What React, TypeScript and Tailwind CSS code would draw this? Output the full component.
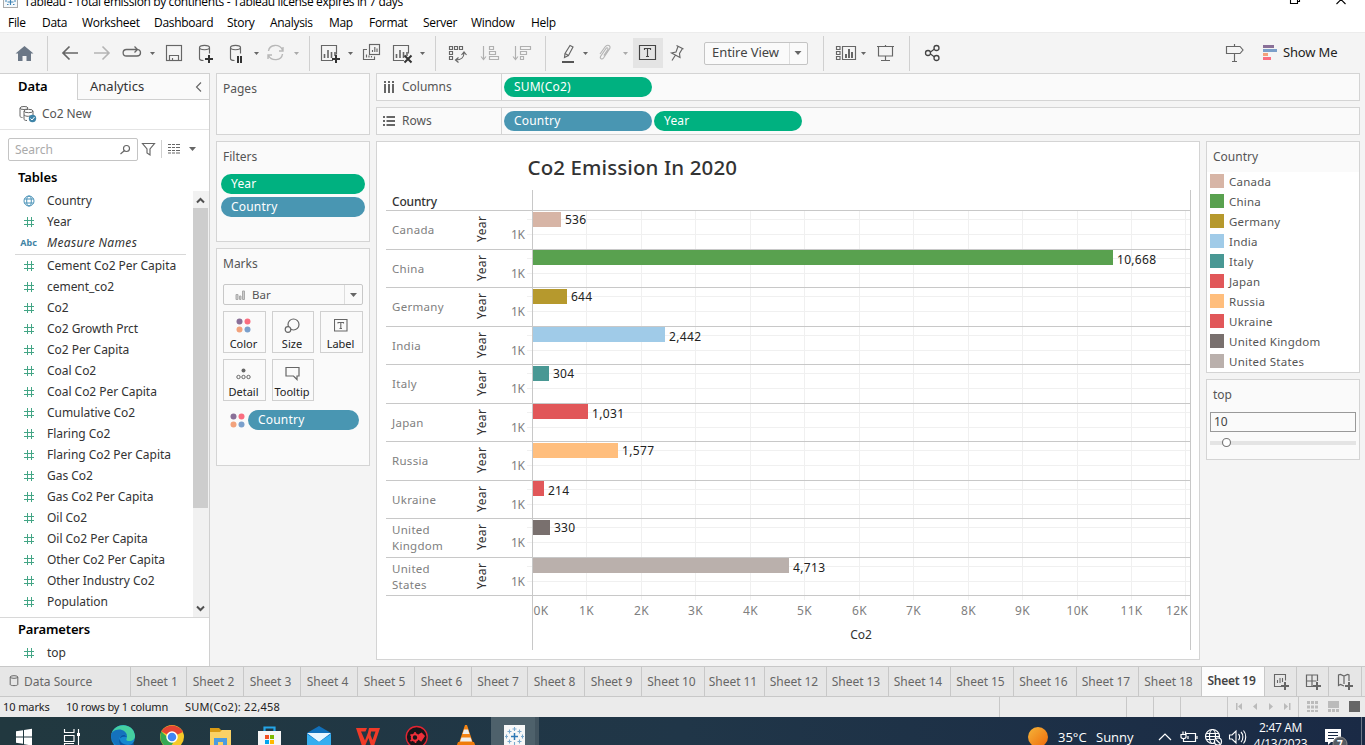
import React from "react";

const ui = "font-['Noto_Sans','Open_Sans',sans-serif]";

/* Icon canvas: coordinates inside are window coordinates, so neighbouring icons share one pixel grid. */
function Ico({ x, y, w, h, children }: { x: number; y: number; w: number; h: number; children?: React.ReactNode }) {
  return (
    <svg className="block shrink-0" width={w} height={h} viewBox={`${x} ${y} ${w} ${h}`} fill="none" stroke="#666" strokeWidth="1.150">
      {children}
    </svg>
  );
}

function Caret({ x, y = 52, s = 3, c = "#666" }: { x: number; y?: number; s?: number; c?: string }) {
  return <path d={`M${x - s} ${y}h${s * 2}l${-s} ${s + 0.5}z`} fill={c} stroke="none" />;
}

const Sep = () => <div className="h-[35px] w-px shrink-0 bg-[#d0d0d0]" />;

const menus: [string, string][] = [
  ["File", "w-[34px]"], ["Data", "w-[40px]"], ["Worksheet", "w-[72px]"], ["Dashboard", "w-[73px]"], ["Story", "w-[43px]"],
  ["Analysis", "w-[59px]"], ["Map", "w-[40px]"], ["Format", "w-[54px]"], ["Server", "w-[48px]"], ["Window", "w-[60px]"], ["Help", "w-[40px]"],
];

function TopBar() {
  return (
    <header className="h-8 shrink-0 overflow-hidden bg-white font-['Open_Sans','Noto_Sans',sans-serif] text-[12px] text-black">
      <div className="flex h-[13px] items-end overflow-hidden">
        <Ico x={0} y={0} w={23} h={13}>
          <rect x="3.500" y="-8.500" width="14" height="16" fill="#f4f8fb" stroke="#aaa" strokeWidth="1" />
          <path d="M10.500-3v8M7.500 2h6M5 1h2M14 1h2M7 4.500h1.500M13 4.500h1.500" stroke="#3f83b5" />
        </Ico>
        <span className="h-[16px] shrink-0 whitespace-nowrap pl-px leading-[9px] tracking-[-0.37px]">Tableau - Total emission by continents - Tableau license expires in 7 days</span>
        <div className="grow" />
        <Ico x={1285} y={0} w={80} h={13}>
          <path d="M1290.500-3v6.500h7v-6.500M1297 1.500h2.500v-4M1336.500 4l9-9M1345.500 4l-9-9" stroke="#000" strokeWidth="1.100" />
        </Ico>
      </div>
      <nav className="flex h-[19px] items-center pl-2 leading-[18px] tracking-[-0.3px]">
        {menus.map(([m, w]) => <span key={m} className={`${w} shrink-0 whitespace-nowrap`}>{m}</span>)}
      </nav>
    </header>
  );
}

function SheetBars({ x, y }: { x: number; y: number }) {
  return <path d={`M${x + 3.500} ${y + 13}v-4M${x + 7} ${y + 13}v-8M${x + 10.500} ${y + 13}v-6M${x + 14} ${y + 11}v-4`} strokeWidth="1.600" />;
}

function Cylinder({ x }: { x: number }) {
  return (
    <>
      <ellipse cx={x + 5} cy="47.500" rx="5" ry="2.200" />
      <path d={`M${x} 47.500v11c0 1.200 2 2 4 2M${x + 10} 47.500v6`} />
    </>
  );
}

function Toolbar() {
  return (
    <div className={`flex h-[41px] shrink-0 items-center border-t border-[#ececec] bg-[#f4f4f4] ${ui}`}>
      <Ico x={0} y={33} w={47} h={40}>
        <path d="M24.500 46l9 7.500h-2.500v7.500h-4.500v-5h-4v5h-4.500v-7.500h-2.500z" fill="#6b7786" stroke="none" />
      </Ico>
      <Sep />
      <Ico x={48} y={33} w={110} h={40}>
        <path d="M78 53h-15M69.500 46.500l-6.500 6.500l6.500 6.500" strokeWidth="1.700" />
        <path d="M94 53h15M102.500 46.500l6.500 6.500l-6.500 6.500" stroke="#b4b4b4" strokeWidth="1.600" />
        <path d="M138 49.500c3.500 1 3.500 6.500-1 6.500h-10.500c-4.500 0-4.500-6.500 0-6.500h11M134.500 46.500l3 3l-3 3" strokeWidth="1.300" />
        <Caret x={152.500} s={2.500} />
      </Ico>
      <Ico x={158} y={33} w={68} h={40}>
        <rect x="166.500" y="45.500" width="15" height="15" />
        <path d="M169.500 60.500v-5h9v5M172.500 58v2.500" />
        <Cylinder x={199.500} />
        <path d="M209 55v8M205 59h8" stroke="#333" strokeWidth="2" />
      </Ico>
      <Ico x={226} y={33} w={83} h={40}>
        <Cylinder x={230.500} />
        <path d="M238 56v7M241 56v7" stroke="#333" strokeWidth="2" />
        <Caret x={256.500} s={2.500} />
        <path d="M268.500 51c1-7 11-7.500 14-1M283 47v4h-4M282.500 54c-1 7-11 7.500-14 1.500M268 59v-4h4" stroke="#b8b8b8" strokeWidth="1.400" />
        <Caret x={296.500} s={2.500} c="#aaa" />
      </Ico>
      <Sep />
      <Ico x={310} y={33} w={125} h={40}>
        <path d="M333 60.500h-11.500v-15h15v9" />
        <SheetBars x={321} y={45} />
        <path d="M336 55v8M332 59h8" stroke="#333" strokeWidth="2" />
        <Caret x={350.500} s={2.500} />
        <rect x="369.500" y="44.500" width="10" height="10" />
        <path d="M367 49.500h-3.500v10h11v-3M372.500 52v-2M374.800 52v-5M377 52v-3.500M366.500 57.500v-3M369 57.500v-2M371.500 57.500v-1.500" />
        <path d="M404 60.500h-10.500v-15h15v8" />
        <SheetBars x={393} y={45} />
        <path d="M404.500 55.500l7 7M411.500 55.500l-7 7" stroke="#333" strokeWidth="2" />
        <Caret x={422.500} s={2.500} />
      </Ico>
      <Sep />
      <Ico x={436} y={33} w={109} h={40}>
        <path d="M449.500 46.500h3v3h-3zM454.500 46.500h3v3h-3zM459.500 46.500h3v3h-3zM449.500 51.500h3v3h-3zM449.500 56.500h3v3h-3z" />
        <path d="M456 60c5 0 8-3 8-7M458.500 57.500l-3 2.500l3 2.500M461.500 55l2.500-3l2.500 3" />
        <g stroke="#b0b0b0">
          <path d="M483.500 46v13M481 56.500l2.500 3l2.500-3M515.500 46v13M513 56.500l2.500 3l2.500-3" />
          <path d="M489.500 46.500h4v3h-4zM489.500 51.500h6v3h-6zM489.500 56.500h9v3h-9zM520.500 46.500h10v3h-10zM520.500 51.500h6v3h-6zM520.500 56.500h3v3h-3z" />
        </g>
      </Ico>
      <Sep />
      <Ico x={546} y={33} w={87} h={40}>
        <path d="M565 53.500l5-8l3 1.500l-4.500 8.500zM565 53.500l-.5 4l4-2" />
        <path d="M562 62h12" stroke="#555" strokeWidth="2" />
        <Caret x={585.500} s={2.500} />
        <path d="M600 54l5-7c2.500-3.500 6.500-1 4.500 2l-6 9c-1.500 2-4 .5-3-1.500l5.500-8c1-1.500 2.500-.5 1.800 1l-4 6" stroke="#b4b4b4" />
        <Caret x={625.500} s={2.500} c="#aaa" />
      </Ico>
      <div className="flex h-[30px] w-[30px] shrink-0 bg-[#e4e4e4]">
        <Ico x={633} y={38} w={30} h={30}>
          <path d="M639.500 45.500h16v14h-16zM644.500 50v-1.500h6v1.500M647.500 48.500v8M646 56.500h3" stroke="#444" />
        </Ico>
      </div>
      <Ico x={663} y={33} w={41} h={40}>
        <path d="M676.500 45.500l7 3.500M678 46.500l-2 5.500l-4.500 1l8.500 4.500l-.5-4l3-5M675.500 55l-3.500 5.500" />
      </Ico>
      <div className="flex h-[23px] w-[104px] shrink-0 items-center rounded-[2px] border border-[#c4c4c4] bg-[#fafafa] text-[13px] text-[#444]">
        <span className="w-[84px] pl-[7px] tracking-[-0.05px]">Entire View</span>
        <div className="h-full w-px bg-[#ddd]" />
        <Ico x={790} y={44} w={17} h={18}><Caret x={798} y={51} s={3.500} /></Ico>
      </div>
      <div className="w-[15px] shrink-0" />
      <Sep />
      <Ico x={824} y={33} w={85} h={40}>
        <path d="M836.500 46.500h3.500v3h-3.500zM836.500 51.500h3.500v3h-3.500zM836.500 56.500h3.500v3h-3.500zM842.500 46.500h13v13h-13z" />
        <path d="M846 58v-4M849 58v-9M852 58v-6" strokeWidth="2" />
        <Caret x={863.500} s={2.500} />
        <path d="M877 46.500h17M878.500 47v9h14v-9M885.500 45v1M885.500 56v4.500M881 60.500h9" />
      </Ico>
      <Sep />
      <Ico x={910} y={33} w={60} h={40}>
        <path d="M930.500 52l4-3M930.500 54l4 3" stroke="#444" />
        <g stroke="#444" strokeWidth="1.300">
          <circle cx="928" cy="53" r="2.500" /><circle cx="936.500" cy="48" r="2.500" /><circle cx="936.500" cy="58" r="2.500" />
        </g>
      </Ico>
      <div className="grow" />
      <Ico x={1220} y={33} w={63} h={40}>
        <path d="M1226.500 46.500h13.500l3 3.500l-3 3.500h-13.500zM1234.500 44v2M1234.500 54v7M1232 61.500h5" />
        <g stroke="none">
          <path d="M1263 45h11v3h-11z" fill="#8a7098" /><path d="M1263 49h14v3h-14z" fill="#7b9fc9" />
          <path d="M1263 53h5v3h-5z" fill="#f2a07a" /><path d="M1263 57h8v3h-8z" fill="#fa6e80" />
        </g>
      </Ico>
      <span className="w-[82px] shrink-0 text-[13px] tracking-[-0.15px] text-[#222]">Show Me</span>
    </div>
  );
}

const Hash = () => (
  <svg className="block shrink-0" width="12" height="12" viewBox="0 0 12 12" stroke="#43a585" strokeWidth="1" fill="none">
    <path d="M4.500 1v10M8.500 1v10M1 4.500h10M1 8.500h10" />
  </svg>
);

const fields = ["Cement Co2 Per Capita", "cement_co2", "Co2", "Co2 Growth Prct", "Co2 Per Capita", "Coal Co2", "Coal Co2 Per Capita", "Cumulative Co2", "Flaring Co2", "Flaring Co2 Per Capita", "Gas Co2", "Gas Co2 Per Capita", "Oil Co2", "Oil Co2 Per Capita", "Other Co2 Per Capita", "Other Industry Co2", "Population"];

function Field({ name, icon }: { name: React.ReactNode; icon?: React.ReactNode }) {
  return (
    <div className="flex h-[21px] shrink-0 items-center">
      <div className="flex w-[47px] shrink-0 justify-center pl-[10px]">{icon ?? <Hash />}</div>
      <span className="whitespace-nowrap tracking-[-0.04px]">{name}</span>
    </div>
  );
}

function DataPane() {
  return (
    <aside className={`flex h-full w-[210px] shrink-0 flex-col border-r border-t border-[#d0d0d0] bg-white text-[12px] text-[#333] ${ui}`}>
      <div className="flex h-[26px] shrink-0 text-[13px]">
        <div className="w-[77px] pl-[18px] font-semibold leading-[25px] tracking-[-0.1px] text-black">Data</div>
        <div className="flex grow justify-between border-b border-l border-[#d0d0d0] bg-[#fafafa] pl-3 leading-[25px]">
          <span>Analytics</span>
          <Ico x={190} y={73} w={19} h={25}><path d="M201 81.500l-4.500 4.500l4.500 4.500" /></Ico>
        </div>
      </div>
      <div className="flex h-[30px] shrink-0 items-center border-b border-[#e4e4e4] pb-px text-[#555]">
        <Ico x={0} y={100} w={42} h={28}>
          <ellipse cx="24" cy="108" rx="4" ry="1.500" strokeWidth="1" />
          <path d="M20 108v8c0 1 1 1.500 2.500 1.500" strokeWidth="1" />
          <ellipse cx="28.500" cy="111" rx="4.500" ry="1.700" fill="#fff" strokeWidth="1" />
          <path d="M24 111v8c0 1 1 1.500 3 1.500M33 111v4M24 115c2 1.500 4 1.500 6 1" strokeWidth="1" />
          <circle cx="32.500" cy="118.500" r="3.700" fill="#3e84a8" stroke="none" />
          <path d="M30.500 118.500l1.500 1.500l2.500-3" stroke="#fff" strokeWidth="1" />
        </Ico>
        <span className="tracking-[-0.1px]">Co2 New</span>
      </div>
      <div className="flex h-[39px] shrink-0 items-center pl-2">
        <div className="flex h-[23px] w-[130px] items-center rounded-[2px] border border-[#c4c4c4] text-[#aaa]">
          <span className="grow pl-[6px]">Search</span>
          <Ico x={118} y={139} w={19} h={21}><circle cx="126.500" cy="148.500" r="3" /><path d="M124.500 150.500l-4 3.500" /></Ico>
        </div>
        <Ico x={138} y={130} w={71} h={39}>
          <path d="M142.500 143.500h12l-4.500 5.500v6l-3-2v-4z" />
          <path d="M161.500 140v18" stroke="#d0d0d0" strokeWidth="1" />
          <path d="M168 144.500h3M172 144.500h3M176 144.500h4M168 147.500h3M172 147.500h3M176 147.500h4M168 150.500h3M172 150.500h3M176 150.500h4M168 153h3M172 153h3M176 153h4" />
          <Caret x={192.500} y={147} s={3.500} />
        </Ico>
      </div>
      <div className="h-[22px] shrink-0 pl-[18px] text-[13px] font-semibold leading-[17px] tracking-[-0.1px] text-black">Tables</div>
      <div className="flex h-[426px] shrink-0">
        <div className="flex w-[193px] flex-col overflow-hidden">
          <div className="-mt-px flex flex-col">
            <Field name="Country" icon={
              <svg width="12" height="12" viewBox="0 0 12 12" stroke="#4b93b8" fill="none"><circle cx="6" cy="6" r="5" /><ellipse cx="6" cy="6" rx="2.300" ry="5" /><path d="M1.500 4h9M1.500 8h9" /></svg>
            } />
            <Field name="Year" />
            <Field name={<i className="tracking-[0.35px]">Measure Names</i>} icon={<span className="text-[9px] font-bold text-[#3f83a5]">Abc</span>} />
          </div>
          <div className="ml-[15px] mr-[7px] mt-px h-px shrink-0 bg-[#d8d8d8]" />
          <div className="flex shrink-0 flex-col">
            {fields.map((f) => <Field key={f} name={f} />)}
          </div>
        </div>
        <div className="flex w-4 flex-col bg-[#f1f1f1]">
          <Ico x={193} y={191} w={16} h={17}><path d="M197 202.500l3.500-3.500l3.500 3.500" stroke="#505050" strokeWidth="2" /></Ico>
          <div className="h-[300px] w-[15px] bg-[#cdcdcd]" />
          <div className="grow" />
          <Ico x={193} y={599} w={16} h={17}><path d="M197 605.500l3.500 3.500l3.500-3.500" stroke="#505050" strokeWidth="2" /></Ico>
        </div>
      </div>
      <div className="h-[25px] shrink-0 border-t border-[#d8d8d8] pl-[18px] text-[13px] font-semibold leading-[23px] tracking-[-0.15px] text-black">Parameters</div>
      <Field name="top" />
    </aside>
  );
}

function Pill({ children, blue, w = "w-full" }: { children: React.ReactNode; blue?: boolean; w?: string }) {
  return <div className={`${w} ${blue ? "bg-[#4996b2]" : "bg-[#00b180]"} flex h-5 shrink-0 items-center rounded-full pl-[10px] text-[12px] tracking-[0.2px] text-white`}>{children}</div>;
}

function ColorDots() {
  return (
    <svg width="15" height="15" viewBox="0 0 15 15" className="shrink-0">
      <circle cx="3.500" cy="3.500" r="3" fill="#8a7098" /><circle cx="11.500" cy="3.500" r="3" fill="#fa6e80" />
      <circle cx="3.500" cy="11.500" r="3" fill="#f2a27c" /><circle cx="11.500" cy="11.500" r="3" fill="#7ba0cc" />
    </svg>
  );
}

function MarkButton({ label, children }: { label: string; children: React.ReactNode }) {
  return (
    <button className="flex h-[42px] flex-col items-center border border-[#d0d0d0] bg-[#fafafa] pr-[2px] text-[11px] text-[#222]">
      <div className="flex h-[26px] items-center justify-center pt-[1px]">{children}</div>
      <span className="whitespace-nowrap leading-[12px]">{label}</span>
    </button>
  );
}

const card = "border border-[#d4d4d4] bg-[#fafafa]";

function Cards() {
  return (
    <section className={`flex w-[154px] shrink-0 flex-col gap-[6px] text-[12px] text-[#555] ${ui}`}>
      <div className={`${card} h-[62px] pl-[6px] pt-[6px] leading-[18px]`}>Pages</div>
      <div className={`${card} h-[101px] px-1 pt-[6px]`}>
        <div className="mb-[8px] pl-[2px] leading-[18px]">Filters</div>
        <div className="flex flex-col gap-[3px]"><Pill>Year</Pill><Pill blue>Country</Pill></div>
      </div>
      <div className={`${card} h-[218px] pl-[6px] pr-[6px] pt-[6px]`}>
        <div className="mb-[11px] leading-[18px]">Marks</div>
        <div className="flex h-[21px] w-[140px] items-center rounded-[2px] border border-[#c8c8c8]">
          <Ico x={224} y={284} w={28} h={19}>
            <path d="M236 293.500h2v5h-2zM239.500 295h1.500v3.500h-1.500zM242.500 290h2v8.500h-2z" stroke="#aaa" fill="#ccc" strokeWidth="1" />
          </Ico>
          <span className="w-[92px] text-[11.500px]">Bar</span>
          <div className="h-full w-px bg-[#ddd]" />
          <Ico x={345} y={285} w={17} h={19}><Caret x={353.500} y={293} s={3.500} /></Ico>
        </div>
        <div className="mt-[6px] grid grid-cols-[43px_42px_43px] gap-[6px]">
          <MarkButton label="Color"><ColorDots /></MarkButton>
          <MarkButton label="Size"><svg width="16" height="16" viewBox="0 0 16 16" fill="none" stroke="#666" strokeWidth="1.200"><circle cx="9.500" cy="6.500" r="5.500" /><circle cx="4" cy="11.500" r="2.800" fill="#fafafa" /></svg></MarkButton>
          <MarkButton label="Label"><svg width="14" height="13" viewBox="0 0 14 13" fill="none" stroke="#666" strokeWidth="1.100"><path d="M.5 .5h12.500v11.500h-12.500zM4 4.500v-1h5.500v1M6.800 3.500v6M5.500 9.500h2.500" /></svg></MarkButton>
          <MarkButton label="Detail"><svg width="15" height="12" viewBox="0 0 15 12" fill="none" stroke="#666"><circle cx="7.500" cy="2.500" r="2" fill="#666" stroke="none" /><circle cx="2.500" cy="9" r="1.700" /><circle cx="7.500" cy="9" r="1.700" /><circle cx="12.500" cy="9" r="1.700" /></svg></MarkButton>
          <MarkButton label="Tooltip"><svg width="15" height="15" viewBox="0 0 15 15" fill="none" stroke="#666" strokeWidth="1.200"><path d="M1 1.500h13v8.500h-2v3.500l-3.500-3.500h-7.500z" /></svg></MarkButton>
        </div>
        <div className="mt-[9px] flex items-center gap-[3px] pl-[7px]"><ColorDots /><Pill blue w="w-[111px]">Country</Pill></div>
      </div>
    </section>
  );
}

function Shelf({ label, icon, children }: { label: string; icon: React.ReactNode; children: React.ReactNode }) {
  return (
    <div className={`${card} flex h-7 shrink-0 items-center text-[12px] text-[#555] ${ui}`}>
      <div className="flex h-full w-[125px] shrink-0 items-center border-r border-[#d4d4d4] pl-[6px]">
        {icon}<span className="pl-[7px] tracking-[0px]">{label}</span>
      </div>
      <div className="flex gap-[2px] pl-[2px]">{children}</div>
    </div>
  );
}

interface Row { name: string; color: string; end: number; value: string; vy: number; label?: string[] }
const rows: Row[] = [
  { name: "Canada", color: "#d7b5a6", end: 561, value: "536", vy: 219 },
  { name: "China", color: "#59a14f", end: 1113, value: "10,668", vy: 259 },
  { name: "Germany", color: "#b6992d", end: 567, value: "644", vy: 296 },
  { name: "India", color: "#a0cbe8", end: 665, value: "2,442", vy: 336 },
  { name: "Italy", color: "#499894", end: 549, value: "304", vy: 373 },
  { name: "Japan", color: "#e15759", end: 588, value: "1,031", vy: 413 },
  { name: "Russia", color: "#ffbe7d", end: 618, value: "1,577", vy: 450 },
  { name: "Ukraine", color: "#e15759", end: 544, value: "214", vy: 490 },
  { name: "United Kingdom", color: "#79706e", end: 550, value: "330", vy: 527, label: ["United", "Kingdom"] },
  { name: "United States", color: "#bab0ac", end: 789, value: "4,713", vy: 567, label: ["United", "States"] },
];
const lines = [210, 249, 287, 326, 364, 403, 441, 480, 518, 557, 595];
const ticks = [586, 641, 695, 750, 804, 859, 913, 968, 1022, 1077, 1131, 1185];

function Chart() {
  return (
    <svg className="block" width="822" height="517" viewBox="377 142 822 517" fontFamily="'Noto Sans', sans-serif" fontSize="12">
      <text x="527.500" y="175" fontSize="20.500" fontWeight="500" fill="#333" textLength="209.500">Co2 Emission In 2020</text>
      <text x="392" y="206" fontWeight="500" fill="#333" textLength="45">Country</text>
      <g shapeRendering="crispEdges">
        {ticks.map((t) => <rect key={t} x={t} y="211" width="1" height="389" fill="#f0f0f0" />)}
        {rows.map((r, i) => (
          <g key={r.name}>
            <rect x="527" y={lines[i] + 9} width="663" height="1" fill="#f0f0f0" />
            <rect x="527" y={lines[i] + 24} width="663" height="1" fill="#f0f0f0" />
          </g>
        ))}
        {lines.map((l) => <rect key={l} x="386" y={l} width="805" height="1" fill="#c8c8c8" />)}
        <rect x="532" y="190" width="1" height="460" fill="#c8c8c8" />
        <rect x="1190" y="190" width="1" height="460" fill="#c8c8c8" />
        {rows.map((r, i) => <rect key={r.name} x="533" y={lines[i] + (i % 2 === 0 ? 2 : 1)} width={r.end - 533} height="15" fill={r.color} />)}
      </g>
      {rows.map((r, i) => (
        <g key={r.name}>
          {r.label
            ? r.label.map((s, k) => <text key={s} x="392" y={lines[i] + 16 + k * 16} fill="#808080" fontSize="11.500" letterSpacing="0.3">{s}</text>)
            : <text x="392" y={lines[i] + 24} fill="#808080" fontSize="11.500" letterSpacing="0.3">{r.name}</text>}
          <text transform={`translate(486 ${lines[i] + 32}) rotate(-90)`} fill="#333" textLength="26">Year</text>
          <text x="511" y={lines[i] + 29} fill="#808080" textLength="14">1K</text>
          <text x={r.end + 4} y={r.vy + 5} fill="#222" textLength={r.value.length === 3 ? 21 : r.value.length === 5 ? 32 : 39}>{r.value}</text>
        </g>
      ))}
      <g fill="#808080" textAnchor="middle" letterSpacing="0.3">
        <text x="541" y="615">0K</text>
        {ticks.map((t, i) => <text key={t} x={i === 11 ? 1177 : t + 0.500} y="615">{`${i + 1}K`}</text>)}
      </g>
      <text x="861" y="639" textAnchor="middle" fill="#333">Co2</text>
    </svg>
  );
}

function Legend() {
  return (
    <aside className="flex w-[154px] shrink-0 flex-col gap-[6px] font-['Noto_Sans',sans-serif] text-[12px] text-[#555]">
      <div className="h-[232px] border border-[#d4d4d4] bg-white">
        <div className="h-[30px] bg-[#fafafa] pl-[6px] leading-[30px]">Country</div>
        {rows.map((r) => (
          <div key={r.name} className="flex h-5 items-center gap-[5px] pl-[3px]">
            <svg width="14" height="14" className="mb-[2px]"><rect width="14" height="14" fill={r.color} /></svg>
            <span className="text-[11.500px] tracking-[0.23px]">{r.name}</span>
          </div>
        ))}
      </div>
      <div className={`${card} h-[81px] px-[3px]`}>
        <div className="h-8 pl-[3px] leading-[30px]">top</div>
        <div className="h-5 border border-[#999] pl-[3px] leading-[18px] text-[#444]">10</div>
        <Ico x={1210} y={432} w={146} h={20}>
          <path d="M1210 443h146" stroke="#e4e4e4" strokeWidth="4" />
          <circle cx="1226.500" cy="442.500" r="4" fill="#fff" stroke="#777" />
        </Ico>
      </div>
    </aside>
  );
}

const tabs: [string, string][] = [
  ["Sheet 1", "w-[56px]"], ["Sheet 2", "w-[57px]"], ["Sheet 3", "w-[57px]"], ["Sheet 4", "w-[57px]"], ["Sheet 5", "w-[57px]"], ["Sheet 6", "w-[57px]"],
  ["Sheet 7", "w-[56px]"], ["Sheet 8", "w-[57px]"], ["Sheet 9", "w-[57px]"], ["Sheet 10", "w-[63px]"], ["Sheet 11", "w-[60px]"], ["Sheet 12", "w-[62px]"],
  ["Sheet 13", "w-[62px]"], ["Sheet 14", "w-[62px]"], ["Sheet 15", "w-[63px]"], ["Sheet 16", "w-[63px]"], ["Sheet 17", "w-[62px]"], ["Sheet 18", "w-[63px]"], ["Sheet 19", "w-[63px]"],
];

function Tabs() {
  return (
    <div className={`flex h-[31px] shrink-0 border-b border-t border-[#c8c8c8] bg-[#e6e6e6] text-[12px] leading-[29px] text-[#666] ${ui}`}>
      <div className="flex w-[131px] shrink-0 border-r border-[#c8c8c8]">
        <Ico x={0} y={667} w={24} h={29}><ellipse cx="14" cy="677" rx="3.800" ry="1.300" strokeWidth="1" /><path d="M10.200 677v7.500c0 1.500 7.600 1.500 7.600 0v-7.500" strokeWidth="1" /></Ico>
        <span>Data Source</span>
      </div>
      {tabs.map(([t, w], i) => (
        <div key={t} className={`${w} shrink-0 whitespace-nowrap border-r border-[#c8c8c8] pr-[3px] text-center ${i === 18 ? "bg-[#fcfcfc] font-semibold leading-[28px] tracking-[-0.25px] text-[#444]" : "tracking-[-0.05px]"}`}>{t}</div>
      ))}
      <div className="w-8 shrink-0 border-r border-[#c8c8c8]">
        <Ico x={1265} y={667} w={31} h={29}><path d="M1281 686.500h-6.500v-12h11v6M1277.500 683v-3M1280 683v-5M1282.500 682v-4" strokeWidth="1.100" /><path d="M1285 682v8M1281 686h8" strokeWidth="2" /></Ico>
      </div>
      <div className="w-8 shrink-0 border-r border-[#c8c8c8]">
        <Ico x={1297} y={667} w={31} h={29}><path d="M1313 686.500h-6.500v-11.500h11v6M1312 675v11M1306.500 681h10" strokeWidth="1.200" /><path d="M1317 682v8M1313 686h8" strokeWidth="2" /></Ico>
      </div>
      <div className="w-[33px] shrink-0 border-r border-[#c8c8c8]">
        <Ico x={1329} y={667} w={31} h={29}><path d="M1344 686l-3.500-1.500l-2 1v-10.500l2-.5l3.500 1.500l3.500-1.500l1.500.5v6M1344 676v8" strokeWidth="1.200" /><path d="M1349 682v8M1345 686h8" strokeWidth="2" /></Ico>
      </div>
    </div>
  );
}

function Status() {
  return (
    <div className={`flex h-5 shrink-0 items-center bg-[#ebebeb] pl-[3px] text-[11px] text-[#222] ${ui}`}>
      <span className="w-[63px] tracking-[-0.1px]">10 marks</span>
      <span className="w-[119px] tracking-[-0.2px]">10 rows by 1 column</span>
      <span className="tracking-[0.27px]">SUM(Co2): 22,458</span>
      <div className="grow" />
      <Ico x={999} y={697} w={366} h={20}>
        <path d="M1126.500 697v20M1153.500 697v20M1180.500 697v20M1227.500 697v20M1298.500 697v20M999.500 697v20" stroke="#c8c8c8" strokeWidth="1" />
        <g fill="#bbb" stroke="none">
          <path d="M1236 703h1.500v7h-1.500zM1242 703v7l-4-3.500zM1257 703v7l-4-3.500zM1269 703v7l4-3.500zM1284 703v7l4-3.500zM1289 703h1.500v7h-1.500z" />
          <path d="M1307 701h3v3h-3zM1311 701h3v3h-3zM1315 701h3v3h-3zM1307 705.500h3v3h-3zM1311 705.500h3v3h-3zM1315 705.500h3v3h-3zM1307 710h3v2h-3zM1311 710h3v2h-3zM1315 710h3v2h-3zM1328 701h11v7h-11zM1328 709h3v3h-3zM1332 709h3v3h-3zM1336 709h3v3h-3z" />
          <path d="M1349 701h11v11h-11z" fill="#666" />
        </g>
      </Ico>
    </div>
  );
}

function Taskbar() {
  return (
    <footer className="flex h-7 shrink-0 overflow-hidden bg-linear-to-r from-[#21383f] via-[#203648] to-[#1a2a45] font-['Open_Sans','Noto_Sans',sans-serif] text-white">
      <Ico x={0} y={717} w={100} h={28}>
        <path d="M16 731.200l7-1v6.300h-7zM24 730l8-1.200v7.700h-8zM16 737.500h7v6.300l-7-1zM24 737.500h8v8l-8-1.200z" fill="#fff" stroke="none" />
        <path d="M64.500 729v3.500h9.500v-3.500M64.500 735.500h9.500v6h-9.500zM64.500 746v-2.500h9.500M78.500 729v16" stroke="#fff" />
        <path d="M77 733h3v3h-3z" fill="#fff" stroke="none" />
      </Ico>
      <Ico x={100} y={717} w={50} h={28}>
        <circle cx="123" cy="737" r="12" fill="#1688d0" stroke="none" />
        <path d="M111.500 734c3-12 22-12 23.500 1.500c.3 4-3 6-7 5.500c-2.500-.4-1.500-2-1-4c0-5-10-7-15.500-3z" fill="#45cfa0" stroke="none" />
        <path d="M111.500 733c5-6 15-4 15.500 3c-4-3-8 0-8 4c0 3 1 5 3 7c-8-1-12-7-10.500-14z" fill="#1572bd" stroke="none" />
        <path d="M127 737c-3-4-8-1-7 3c1 4 8 7 14 3l-1 5h-9c-7-3-7-13 3-11z" fill="#0c55a3" stroke="none" />
      </Ico>
      <Ico x={150} y={717} w={50} h={28}>
        <circle cx="172" cy="737" r="12" fill="#f7c928" stroke="none" />
        <path d="M172 737l-10.500-5.500c4-8 17-8.500 21.500.5z" fill="#e64434" stroke="none" />
        <path d="M161.300 731.500c-3 7 1 15 8 17l4-6z" fill="#36a853" stroke="none" />
        <circle cx="172" cy="737" r="5" fill="#4285f4" stroke="#fff" strokeWidth="1.500" />
      </Ico>
      <Ico x={200} y={717} w={50} h={28}>
        <g stroke="none"><path d="M210 728h9l2 2h10v4h-21z" fill="#d99b14" /><path d="M210 732h10l2-2h9v16h-21z" fill="#fad165" /><path d="M214 738h13v8h-13z" fill="#4b9be0" /><path d="M218 742h5v4h-5z" fill="#fad165" /></g>
      </Ico>
      <Ico x={250} y={717} w={50} h={28}>
        <path d="M264.500 731v-3.500h10v3.500" stroke="#24a5e8" strokeWidth="2.200" />
        <g stroke="none"><path d="M258 731h23v15h-23z" fill="#f6f6f6" /><path d="M265 735h4v4h-4z" fill="#f25022" /><path d="M270 735h4v4h-4z" fill="#7fba00" /><path d="M265 740h4v4h-4z" fill="#00a4ef" /><path d="M270 740h4v4h-4z" fill="#ffb900" /></g>
      </Ico>
      <Ico x={300} y={717} w={50} h={28}>
        <g stroke="none"><path d="M307 733l12-7l12 7v13h-24z" fill="#1170bb" /><path d="M307 733h24l-12 9z" fill="#eaf6ff" /><path d="M307 734l12 8l12-8v12h-24z" fill="#35aef0" /></g>
      </Ico>
      <Ico x={350} y={717} w={50} h={28}>
        <g stroke="none" fill="#f03a28">
          <path d="M356 728h11l-1.500 3.500h-4.500l4 9l3-8l1-4.500h11l-6 18h-3l-2.500-8l-3.500 8h-3z" />
          <path d="M371 731.500h4.500l-3 8.500l-2-5z" fill="#21383f" />
        </g>
      </Ico>
      <Ico x={400} y={717} w={47} h={28}>
        <circle cx="416.700" cy="737" r="10.500" fill="#181519" stroke="#e42432" strokeWidth="1.300" />
        <circle cx="415" cy="737.500" r="3.200" stroke="#f0303a" strokeWidth="2" />
        <path d="M415 732v2M410.500 734.500l2 1.500M410.500 741l2-1.500M415.500 743v-2M419 735l2.500-1.500l2.500 2.500l-3 4.500l-2-1.500z" stroke="#f0303a" strokeWidth="1.600" fill="#f0303a" />
      </Ico>
      <Ico x={447} y={717} w={44} h={28}>
        <g stroke="none"><path d="M465 725h2l6 18h-14z" fill="#f58413" /><path d="M464 729.500h4l1.500 4.500h-7z" fill="#eee" /><path d="M461.500 737.500h9l1.500 4h-12z" fill="#eee" /><path d="M458 742h16l1.500 4h-19z" fill="#ef7b0a" /></g>
      </Ico>
      <div className="flex w-[44px] shrink-0 bg-[#4e616b]">
        <Ico x={491} y={717} w={44} h={28}>
          <path d="M504 725h21v21h-21z" fill="#f7f7f7" stroke="none" />
          <path d="M514.500 733v7M511 736.500h7" stroke="#2d78b5" strokeWidth="1.500" />
          <path d="M514.500 727v4M512.500 729h4M514.500 742v3M506.500 734.500v4M505 736.500h3M522.500 734.500v4M521 736.500h3M509.500 729.500v4M507.500 731.500h4M519.500 729.500v4M517.500 731.500h4M509.500 739.500v4M507.500 741.500h4M519.500 739.500v4M517.500 741.500h4" stroke="#7aa9cd" strokeWidth="1.100" />
        </Ico>
      </div>
      <div className="h-full w-[4px] shrink-0 bg-[#42545f]" />
      <div className="grow" />
      <Ico x={1020} y={717} w={38} h={28}>
        <defs><linearGradient id="sun" x1="0" y1="0" x2="1" y2="1"><stop offset="0" stopColor="#f5b53a" /><stop offset="1" stopColor="#ef6a0a" /></linearGradient></defs>
        <circle cx="1038" cy="737" r="10" fill="url(#sun)" stroke="none" />
      </Ico>
      <span className="w-[38px] shrink-0 pt-[10px] text-[13px] leading-5">35°C</span>
      <span className="w-[59px] shrink-0 pt-[10px] text-[13px] leading-5">Sunny</span>
      <Ico x={1155} y={717} w={95} h={28}>
        <g stroke="#fff" strokeWidth="1.200">
          <path d="M1159 740l6-6l6 6M1186 733.500h9.500v8h-9M1197 736v3M1188 736v3M1181 734.500h5v2.500c0 2-5 2-5 0zM1183 731.500v3M1185.500 731.500v3M1183.500 738v3.500h3" />
          <circle cx="1212.500" cy="736.500" r="7" /><ellipse cx="1212.500" cy="736.500" rx="3" ry="7" /><path d="M1206 733.500h13M1206 739.500h8M1205.500 736.500h14" strokeWidth="1" />
          <circle cx="1218" cy="741.500" r="3.500" fill="#1d2d45" /><path d="M1216 739.500l4 4" />
          <path d="M1229.500 735v4h2.500l4 4v-12l-4 4zM1238.500 734c1.500 1.500 1.500 4.500 0 6M1241 732c2.500 2.500 2.500 7.500 0 10M1243.500 730.500c3 3.500 3 9.500 0 13" strokeWidth="1.100" />
        </g>
      </Ico>
      <div className="flex h-8 w-[61px] shrink-0 flex-col items-center pt-[3px] text-[12px] leading-4 tracking-[-0.35px]">
        <span className="whitespace-nowrap">2:47 AM</span><span>4/13/2023</span>
      </div>
      <Ico x={1311} y={717} w={54} h={28}>
        <path d="M1325 729h16v13h-10l-3 3v-3h-3z" fill="#fff" stroke="none" />
        <path d="M1328 732.500h10M1328 735.500h10M1328 738.500h6" stroke="#1a2a45" strokeWidth="1.100" />
        <circle cx="1340" cy="744" r="7" fill="#555b63" stroke="#888" strokeWidth="1" />
        <text x="1337" y="748" fontSize="10" fill="#fff" stroke="none" fontWeight="700">7</text>
        <path d="M1361.500 717v28" stroke="#6d7686" strokeWidth="1" />
      </Ico>
    </footer>
  );
}

export default function App() {
  return (
    <div className="flex h-[745px] w-[1365px] flex-col overflow-hidden bg-[#f4f4f4]">
      <TopBar />
      <Toolbar />
      <main className="flex h-[593px] shrink-0">
        <DataPane />
        <div className="flex grow gap-[6px] pl-[6px]">
          <Cards />
          <div className="flex w-[984px] flex-col gap-[6px]">
            <Shelf label="Columns" icon={<svg width="12" height="14" viewBox="0 0 12 14" stroke="#666" strokeWidth="2"><path d="M2 1v2M2 4v9M6 1v2M6 4v9M10 1v2M10 4v9" /></svg>}>
              <Pill w="w-[148px]">SUM(Co2)</Pill>
            </Shelf>
            <Shelf label="Rows" icon={<svg width="12" height="12" viewBox="0 0 12 12" stroke="#666" strokeWidth="1.800"><path d="M0 2h2M3.500 2h8.500M0 6h2M3.500 6h8.500M0 10h2M3.500 10h8.500" /></svg>}>
              <Pill blue w="w-[148px]">Country</Pill>
              <Pill w="w-[148px]">Year</Pill>
            </Shelf>
            <div className="flex gap-[6px]">
              <div className="w-[824px] shrink-0 border border-[#d4d4d4] bg-white"><Chart /></div>
              <Legend />
            </div>
          </div>
        </div>
      </main>
      <Tabs />
      <Status />
      <Taskbar />
    </div>
  );
}
